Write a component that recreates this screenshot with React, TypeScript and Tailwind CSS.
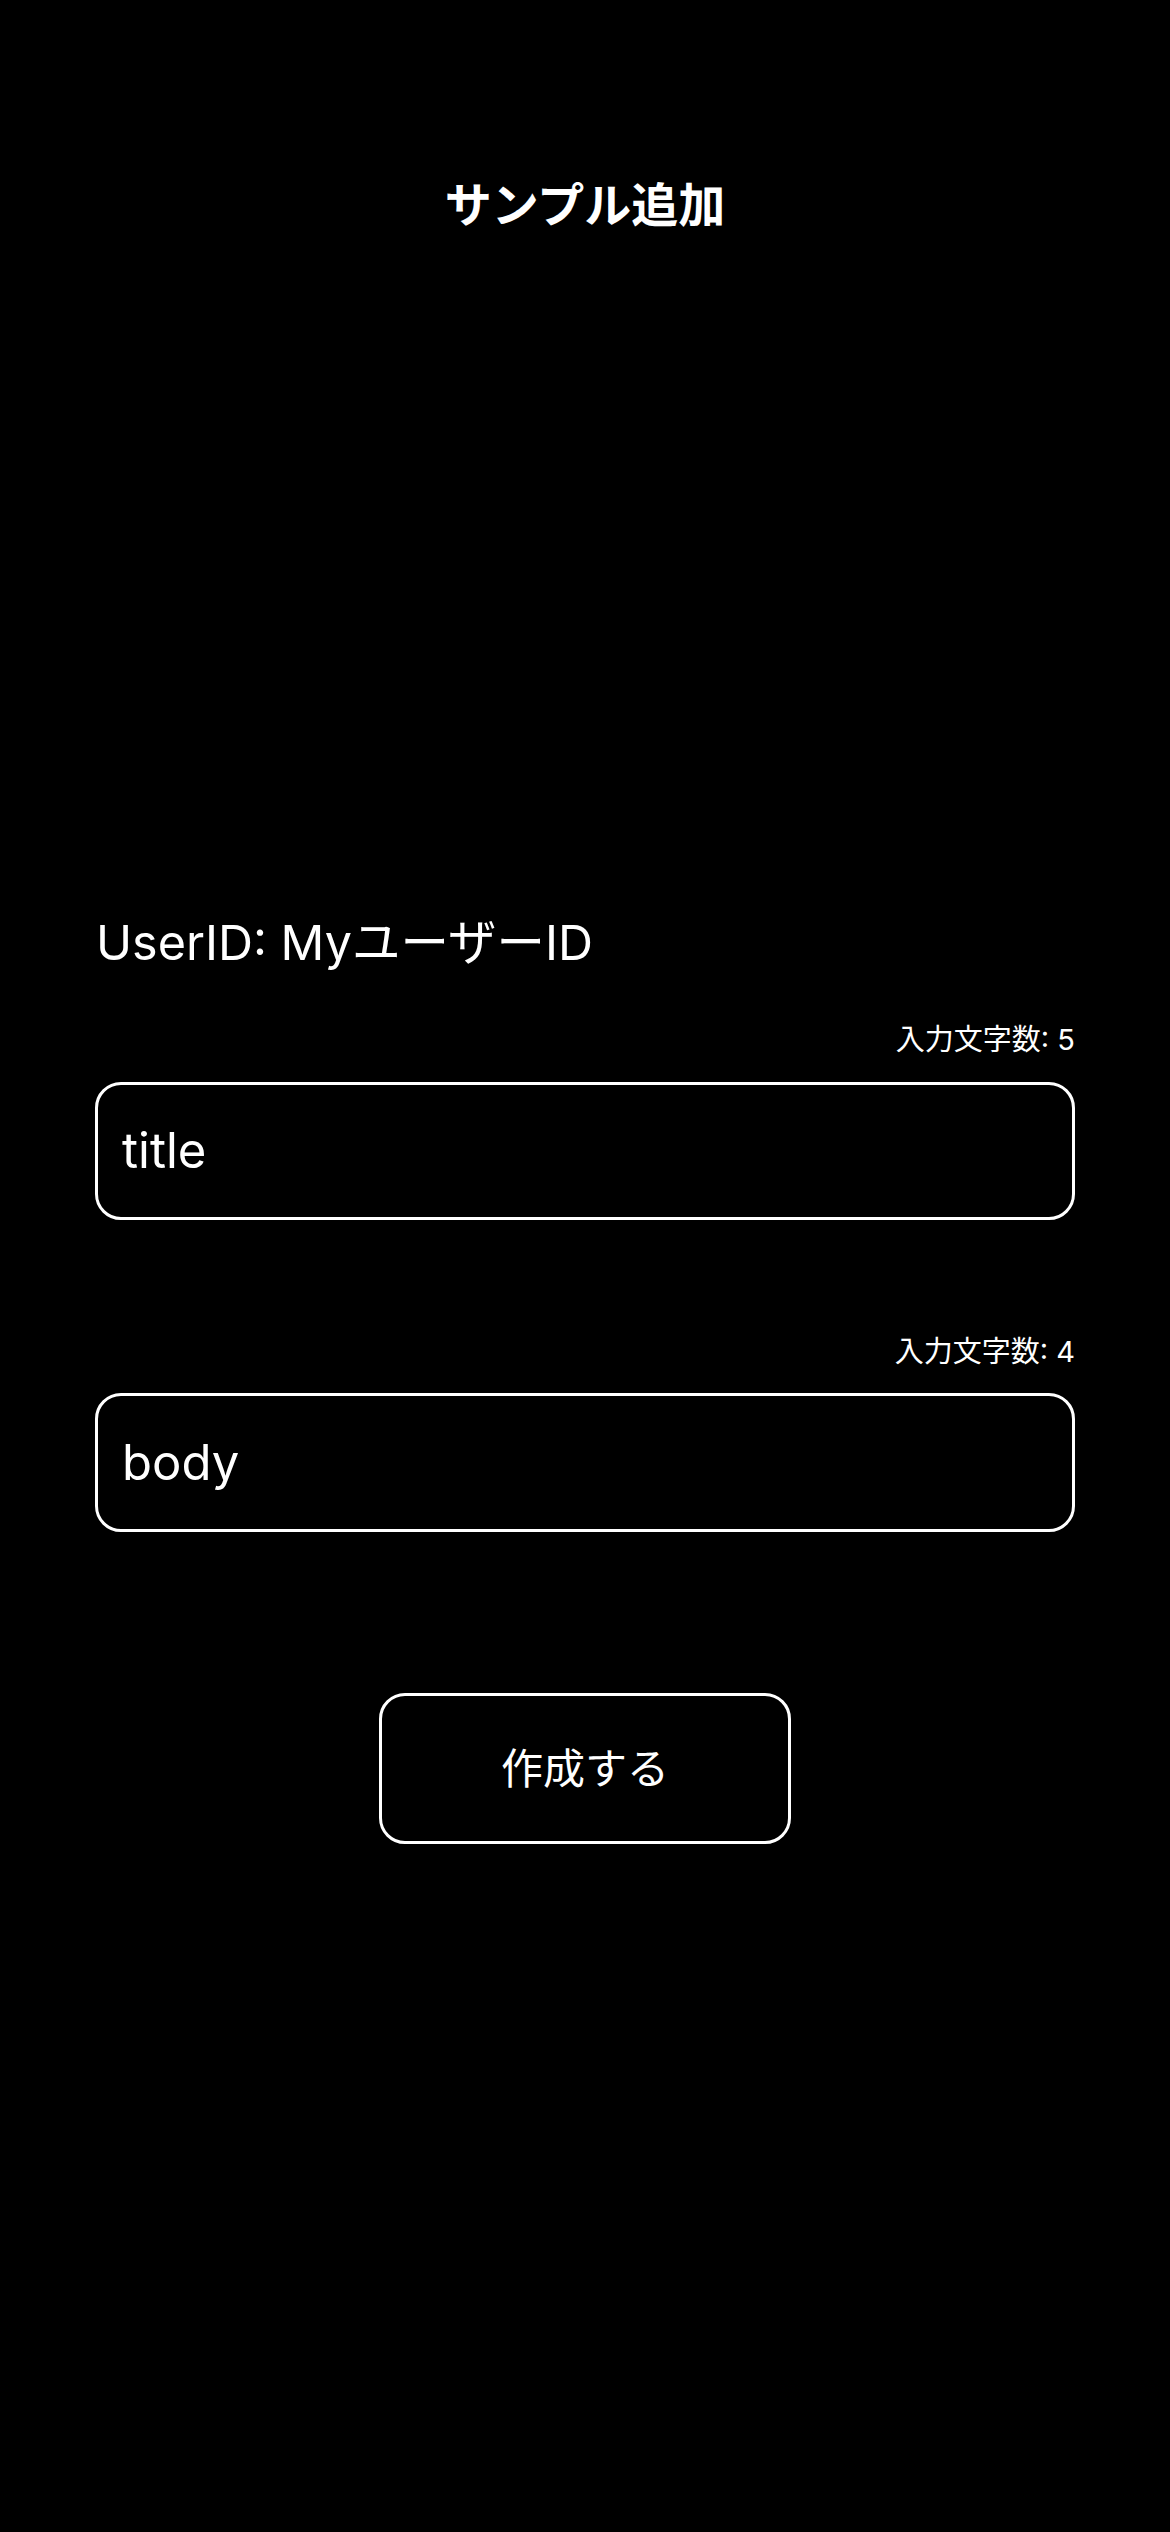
import React from "react";

const font = { fontFamily: 'Inter, "Noto Sans CJK JP", sans-serif' };

export default function App() {
  return (
    <div
      className="w-[1170px] min-h-[2532px] bg-black text-white flex flex-col px-[95px]"
      style={font}
    >
      <div className="pt-[176px] h-[234px] flex justify-center">
        <h1 className="text-[47px] leading-[58px] font-semibold">サンプル追加</h1>
      </div>
      <div className="mt-[679px] text-[48.5px] leading-[60px] h-[60px] pl-[1px]">UserID: Myユーザー<span className="tracking-normal">ID</span></div>

      <div className="mt-[49px] text-right text-[29px] leading-[36px] h-[36px]">入力文字数: 5</div>
      <div className="mt-[24px] h-[138px] border-[3px] border-white rounded-[26px] flex items-center px-[24px]">
        <span className="text-[49px]">title</span>
      </div>

      <div className="mt-[114px] text-right text-[29px] leading-[36px] h-[36px]">入力文字数: 4</div>
      <div className="mt-[23px] h-[139px] border-[3px] border-white rounded-[26px] flex items-center px-[24px]">
        <span className="text-[49px]">body</span>
      </div>

      <div className="mt-[161px] flex justify-center">
        <button className="w-[412px] h-[151px] border-[3px] border-white rounded-[26px] text-[42px] flex items-center justify-center bg-black text-white">
          作成する
        </button>
      </div>
    </div>
  );
}
